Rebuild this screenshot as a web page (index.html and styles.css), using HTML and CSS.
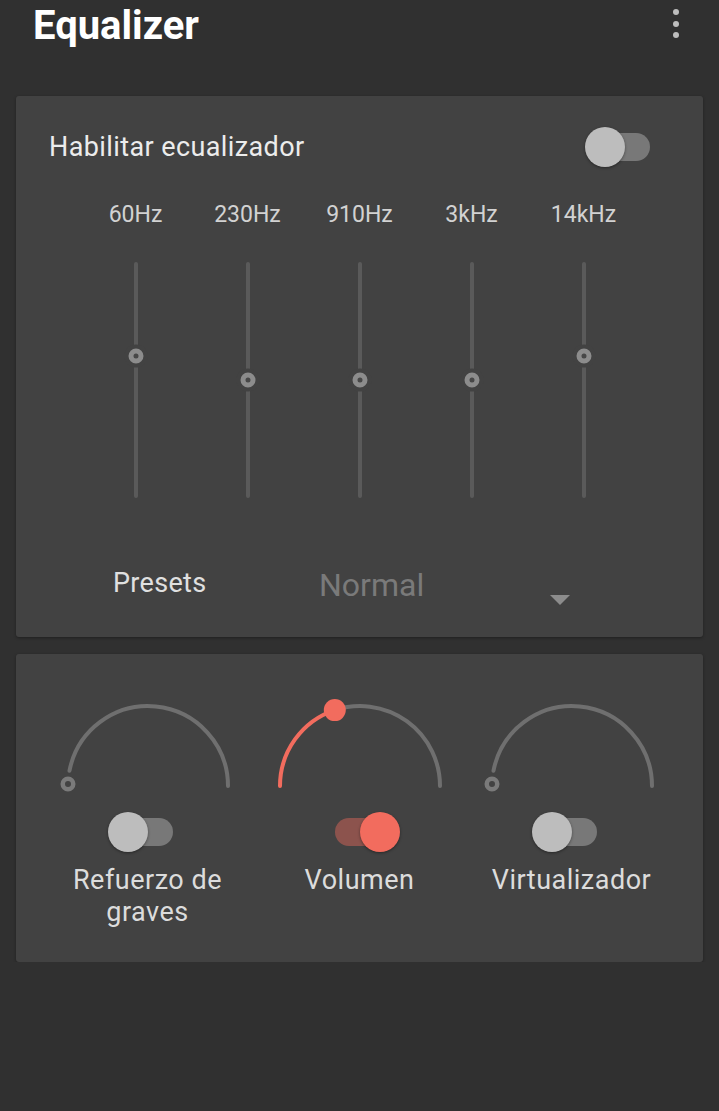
FILE: index.html
```html
<!DOCTYPE html>
<html>
<head>
    <title>Equalizer</title>
    <link rel="stylesheet" href="styles.css">
</head>
<body>

    <header class="app-bar">
        <h1 class="title">Equalizer</h1>
        <div class="menu"><span></span><span></span><span></span></div>
    </header>

    <section class="card eq-card">
        <div class="eq-head">
            <span class="eq-label">Habilitar ecualizador</span>
            <div class="switch"><span class="track"></span><span class="thumb"></span></div>
        </div>

        <div class="bands">
            <div class="band">
                <span class="band-name">60Hz</span>
                <div class="slider"><span class="knob" style="top: 40%"></span></div>
            </div>
            <div class="band">
                <span class="band-name">230Hz</span>
                <div class="slider"><span class="knob" style="top: 50%"></span></div>
            </div>
            <div class="band">
                <span class="band-name">910Hz</span>
                <div class="slider"><span class="knob" style="top: 50%"></span></div>
            </div>
            <div class="band">
                <span class="band-name">3kHz</span>
                <div class="slider"><span class="knob" style="top: 50%"></span></div>
            </div>
            <div class="band">
                <span class="band-name">14kHz</span>
                <div class="slider"><span class="knob" style="top: 40%"></span></div>
            </div>
        </div>

        <div class="presets">
            <span class="presets-label">Presets</span>
            <span class="presets-value">Normal</span>
            <span class="caret"></span>
        </div>
    </section>

    <section class="card fx-card">
        <div class="fx">
            <svg class="dial" viewBox="0 0 200 100">
                <path class="arc" d="M21.5 75.7A80 80 0 0 1 180 91"/>
                <circle class="ring" cx="20" cy="89" r="5.25"/>
            </svg>
            <div class="switch"><span class="track"></span><span class="thumb"></span></div>
            <p class="fx-name">Refuerzo de<br>graves</p>
        </div>
        <div class="fx">
            <svg class="dial" viewBox="0 0 200 100">
                <path class="arc" d="M74.8 15.1A80 80 0 0 1 180 91"/>
                <path class="arc active" d="M20 91A80 80 0 0 1 74.8 15.1"/>
                <circle class="dot" cx="74.8" cy="15.1" r="11"/>
            </svg>
            <div class="switch on"><span class="track"></span><span class="thumb"></span></div>
            <p class="fx-name">Volumen</p>
        </div>
        <div class="fx">
            <svg class="dial" viewBox="0 0 200 100">
                <path class="arc" d="M21.5 75.7A80 80 0 0 1 180 91"/>
                <circle class="ring" cx="20" cy="89" r="5.25"/>
            </svg>
            <div class="switch"><span class="track"></span><span class="thumb"></span></div>
            <p class="fx-name">Virtualizador</p>
        </div>
    </section>

</body>
</html>
```

FILE: styles.css
```css
body {
    margin: 0;
    background-color: #303030;
    font-family: Roboto, "Noto Sans", sans-serif;
}

/* top bar */
.app-bar {
    display: flex;
    justify-content: space-between;
    align-items: flex-start;
    height: 96px;
    padding: 0 40px 0 33px;
}

.title {
    margin: 0;
    font-size: 40px;
    line-height: 52px;
    font-weight: 700;
    color: #ffffff;
}

.menu {
    display: flex;
    flex-direction: column;
    gap: 5.7px;
    padding-top: 9px;
}

.menu span {
    width: 6px;
    height: 6px;
    border-radius: 50%;
    background-color: #bdbdbd;
}

/* cards */
.card {
    margin: 0 16px;
    background-color: #424242;
    border-radius: 3px;
    box-shadow: 0 1px 3px rgba(0, 0, 0, 0.35);
}

.eq-card {
    padding: 31px 0 27px;
}

.eq-head {
    display: flex;
    justify-content: space-between;
    align-items: center;
    height: 40px;
    padding: 0 38px 0 33px;
}

.eq-label {
    font-size: 27px;
    line-height: 40px;
    letter-spacing: 0.4px;
    color: #ececec;
}

/* switch */
.switch {
    position: relative;
    flex: none;
    width: 80px;
    height: 40px;
}

.switch .track {
    position: absolute;
    top: 6px;
    left: 5px;
    width: 60px;
    height: 28px;
    border-radius: 14px;
    background-color: #787878;
}

.switch .thumb {
    position: absolute;
    top: 0;
    left: 0;
    width: 40px;
    height: 40px;
    border-radius: 50%;
    background-color: #bdbdbd;
    box-shadow: 0 1px 3px rgba(0, 0, 0, 0.4);
}

.switch.on .track {
    left: 15px;
    background-color: rgba(242, 108, 94, 0.42);
}

.switch.on .thumb {
    left: 40px;
    background-color: #f26c5e;
}

/* band sliders */
.bands {
    display: grid;
    grid-template-columns: repeat(5, 112px);
    justify-content: center;
    margin-top: 32px;
}

.band {
    display: flex;
    flex-direction: column;
    align-items: center;
}

.band-name {
    font-size: 23px;
    line-height: 32px;
    color: #d2d2d2;
}

.slider {
    position: relative;
    width: 20px;
    height: 236px;
    margin-top: 31px;
}

.slider::before {
    content: "";
    position: absolute;
    top: 0;
    bottom: 0;
    left: 8px;
    width: 4px;
    border-radius: 2px;
    background-color: #5a5a5a;
}

.knob {
    position: absolute;
    left: 50%;
    width: 15px;
    height: 15px;
    box-sizing: border-box;
    border: 5px solid #8c8c8c;
    border-radius: 50%;
    background-color: #474747;
    box-shadow: 0 0 0 4px #424242;
    transform: translate(-50%, -50%);
}

/* presets */
.presets {
    display: flex;
    align-items: center;
    height: 50px;
    margin-top: 60px;
    margin-bottom: 2px;
    padding-left: 97px;
}

.presets-label {
    width: 206px;
    font-size: 27px;
    letter-spacing: 0.3px;
    color: #e0e0e0;
}

.presets-value {
    width: 231px;
    font-size: 32px;
    color: #7a7a7a;
    position: relative;
    top: 2px;
}

.caret {
    align-self: flex-end;
    margin-bottom: 3px;
    width: 0;
    height: 0;
    border-left: 10px solid transparent;
    border-right: 10px solid transparent;
    border-top: 10px solid #8c8c8c;
}

/* effects card */
.fx-card {
    display: grid;
    grid-template-columns: repeat(3, 212px);
    justify-content: center;
    margin-top: 17px;
    padding: 41px 0 34px;
}

.fx {
    display: flex;
    flex-direction: column;
    align-items: center;
}

.dial {
    display: block;
    width: 200px;
    height: 100px;
}

.dial .arc {
    fill: none;
    stroke: #6f6f6f;
    stroke-width: 4;
    stroke-linecap: round;
}

.dial .arc.active {
    stroke: #f26c5e;
}

.dial .ring {
    fill: none;
    stroke: #7a7a7a;
    stroke-width: 4.5;
}

.dial .dot {
    fill: #f26c5e;
}

.fx .switch {
    margin-top: 17px;
}

.fx-name {
    margin: 12px 0 0;
    font-size: 27px;
    line-height: 32px;
    letter-spacing: 0.5px;
    color: #dcdcdc;
    text-align: center;
}
```
